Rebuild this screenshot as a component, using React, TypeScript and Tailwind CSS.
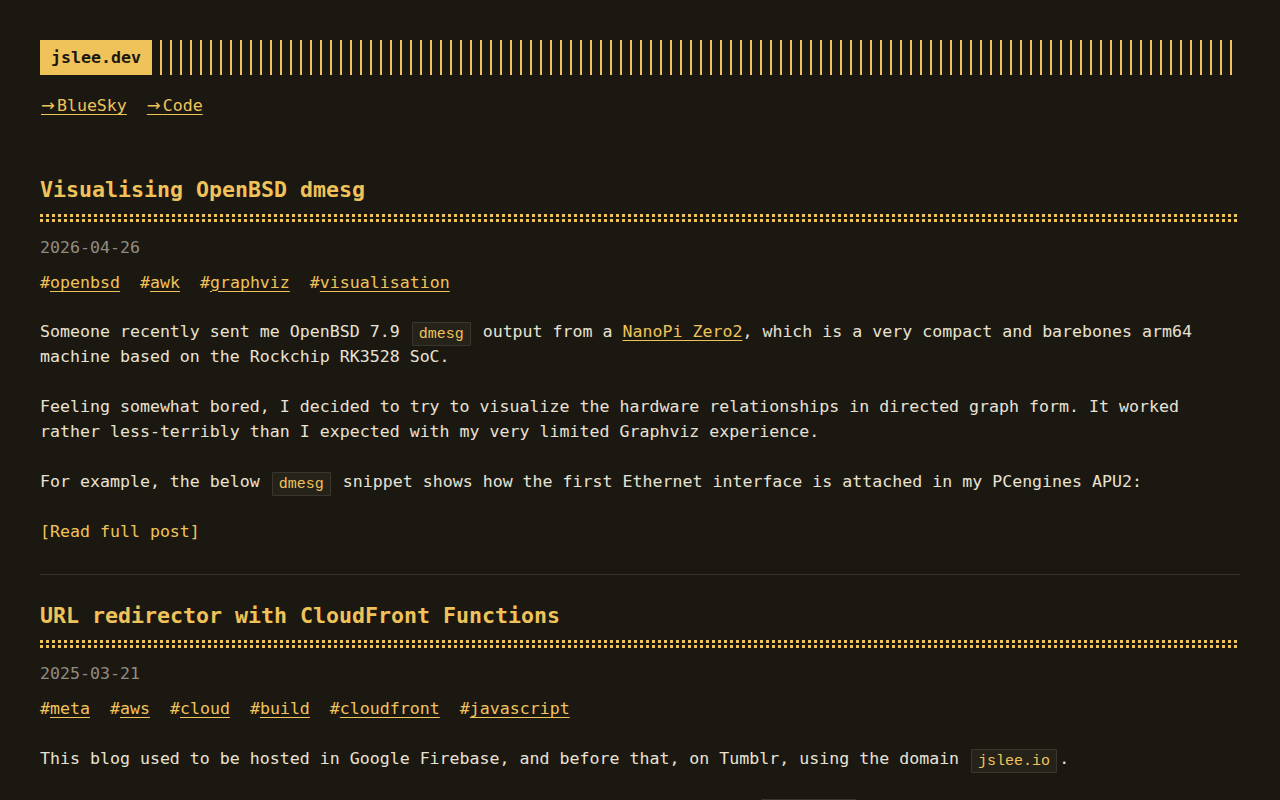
const mono = "font-['DejaVu_Sans_Mono','Liberation_Mono',monospace]";

function Code({ children }: { children: string }) {
  return (
    <code className="mx-[2px] rounded-[1px] border border-[#3a362d] bg-[#25221a] px-[6px] py-[2.5px] text-[15px] leading-none text-[#f0c35a]">
      {children}
    </code>
  );
}

function Tags({ tags }: { tags: string[] }) {
  return (
    <div className="mt-[10px] flex gap-5 text-[#f0c35a]">
      {tags.map((t) => (
        <span key={t}>
          #<a href="#" className="underline underline-offset-[3px]">{t}</a>
        </span>
      ))}
    </div>
  );
}

function Rule() {
  return (
    <div className="mt-[9px] flex flex-col gap-[2px]">
      <div className="h-[3px] bg-[repeating-linear-gradient(90deg,#f0c35a_0_3px,transparent_3px_6px)]" />
      <div className="h-[3px] bg-[repeating-linear-gradient(90deg,#f0c35a_0_3px,transparent_3px_6px)]" />
    </div>
  );
}

function PostHead({ title, date, tags }: { title: string; date: string; tags: string[] }) {
  return (
    <>
      <h2 className="text-[21.6px] font-bold leading-[30px] text-[#f0c35a]">{title}</h2>
      <Rule />
      <div className="mt-[13px] text-[#928c80]">{date}</div>
      <Tags tags={tags} />
    </>
  );
}

function NavLink({ label }: { label: string }) {
  return (
    <a href="#" className="underline underline-offset-[3px]">
      <span className="font-['DejaVu_Sans',sans-serif] tracking-[2px]">→</span>
      {label}
    </a>
  );
}

export default function App() {
  return (
    <div className={`${mono} min-h-screen bg-[#1b1812] p-10 text-[16.6px] leading-[25px] text-[#e8e2d2]`}>
      <header className="flex h-[35px]">
        <div className="flex items-center bg-[#f0c35a] px-[11px] font-bold text-[#1b1812]">jslee.dev</div>
        <div className="ml-2 flex-1 bg-[repeating-linear-gradient(90deg,#f0c35a_0_2px,transparent_2px_10px)]" />
      </header>
      <nav className="mt-[18px] flex gap-5 pl-px text-[#f0c35a]">
        <NavLink label="BlueSky" />
        <NavLink label="Code" />
      </nav>

      <article className="mt-[57px]">
        <PostHead
          title="Visualising OpenBSD dmesg"
          date="2026-04-26"
          tags={["openbsd", "awk", "graphviz", "visualisation"]}
        />
        <div className="mt-[24px] flex flex-col gap-[25px]">
          <p>
            Someone recently sent me OpenBSD 7.9 <Code>dmesg</Code> output from a{" "}
            <a href="#" className="text-[#f0c35a] underline underline-offset-[3px]">NanoPi Zero2</a>, which is a very
            compact and barebones arm64 machine based on the Rockchip RK3528 SoC.
          </p>
          <p>
            Feeling somewhat bored, I decided to try to visualize the hardware relationships in directed graph form. It
            worked rather less-terribly than I expected with my very limited Graphviz experience.
          </p>
          <p>
            For example, the below <Code>dmesg</Code> snippet shows how the first Ethernet interface is attached in my
            PCengines APU2:
          </p>
          <a href="#" className="self-start text-[#f0c35a]">[Read full post]</a>
        </div>
      </article>

      <hr className="mt-[30px] border-0 border-t border-[#37332b]" />

      <article className="mt-[26px]">
        <PostHead
          title="URL redirector with CloudFront Functions"
          date="2025-03-21"
          tags={["meta", "aws", "cloud", "build", "cloudfront", "javascript"]}
        />
        <div className="mt-[25px] flex flex-col gap-[25px]">
          <p>
            This blog used to be hosted in Google Firebase, and before that, on Tumblr, using the domain{" "}
            <Code>jslee.io</Code>.
          </p>
          <p>
            I had a bunch of old links pointing at the old domain, so I wanted both <Code>jslee.dev</Code> and the
            old name to keep working after the move.
          </p>
        </div>
      </article>
    </div>
  );
}
